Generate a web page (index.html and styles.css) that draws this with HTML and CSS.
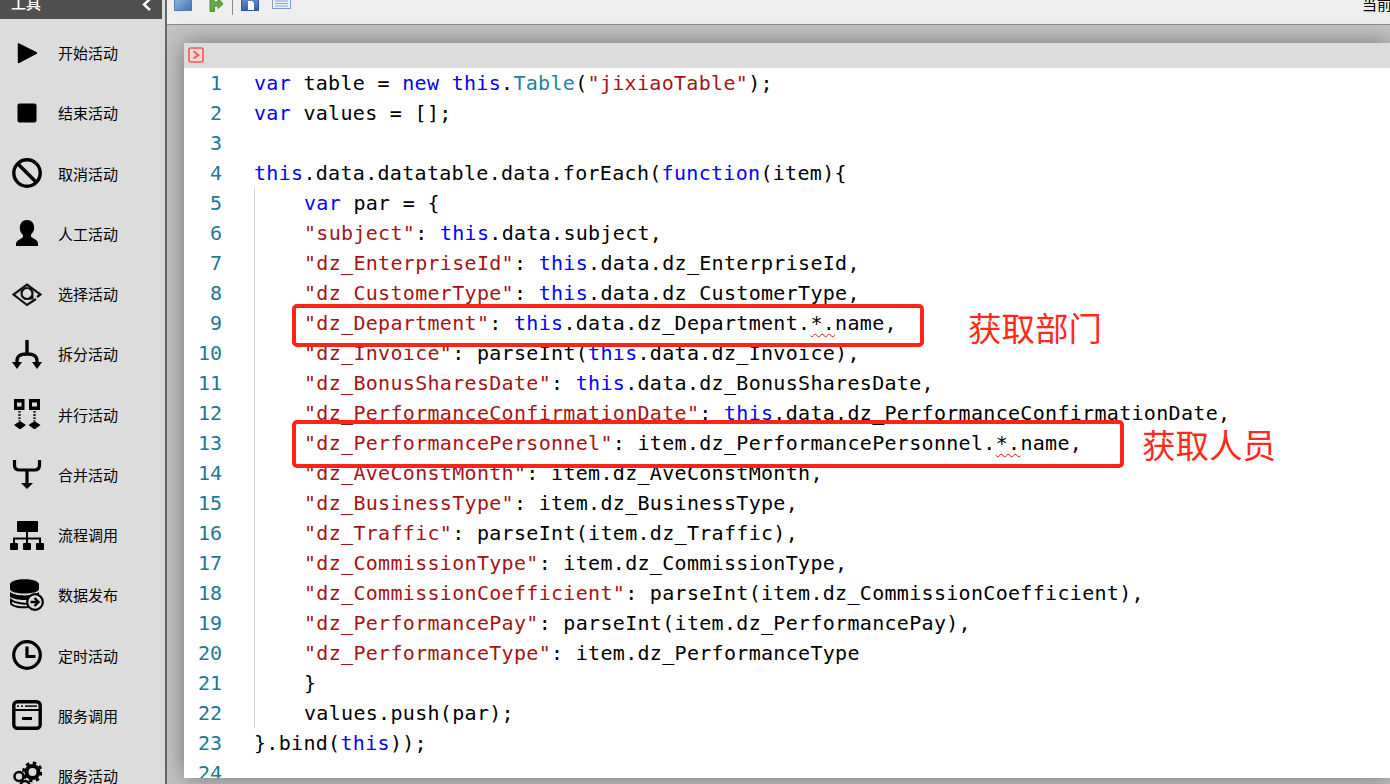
FILE: index.html
```html
<!DOCTYPE html>
<html lang="zh">
<head>
<meta charset="utf-8">
<title>流程设计</title>
<link rel="stylesheet" href="styles.css">
</head>
<body>
<aside class="sidebar">
  <div class="side-head"><span class="side-title">工具</span>
    <svg class="chev" width="10" height="12" viewBox="0 0 10 12"><path d="M8 -1 L2 4.500 L8 10" fill="none" stroke="#fff" stroke-width="2.400"/></svg>
  </div>
  <ul class="tools">
    <li class="tool"><svg class="ico" viewBox="0 0 30 30"><path d="M6.500 6 L24.500 15 L6.500 24.500Z" fill="#000" stroke="#000" stroke-width="1.500" stroke-linejoin="round"/></svg><span>开始活动</span></li>
    <li class="tool"><svg class="ico" viewBox="0 0 30 30"><rect x="5.500" y="5.500" width="19" height="19" rx="2" fill="#000"/></svg><span>结束活动</span></li>
    <li class="tool"><svg class="ico" viewBox="0 0 30 30"><circle cx="15" cy="15" r="13.200" fill="none" stroke="#000" stroke-width="3.400"/><path d="M6 6 L24 24" stroke="#000" stroke-width="3.600"/></svg><span>取消活动</span></li>
    <li class="tool"><svg class="ico" viewBox="0 0 30 30"><path d="M15 2c4.500 0 7.200 3.500 7.200 7.500 0 3-1.500 5.500-3.200 7v2c0 1.500 7 2.500 7 7v2.500H4V26c0-4.500 7-5.500 7-7v-2c-1.700-1.500-3.200-4-3.200-7C7.800 5.500 10.500 2 15 2Z" fill="#000"/></svg><span>人工活动</span></li>
    <li class="tool"><svg class="ico" viewBox="0 0 30 30"><path d="M24 20 L15 26 L1.500 15.500 L15 5.500 L28.500 15.500 L25 18" fill="none" stroke="#111" stroke-width="2.200"/><circle cx="15" cy="14.500" r="5.500" fill="none" stroke="#111" stroke-width="2.200"/><path d="M17 20.500h4.500v-4.500z" fill="#111"/></svg><span>选择活动</span></li>
    <li class="tool"><svg class="ico" viewBox="0 0 30 30"><path d="M15 1v13M5 25v-3c0-5 3-7 10-7s10 2 10 7v3" fill="none" stroke="#000" stroke-width="3.400"/><path d="M0 23h10l-5 7zM20 23h10l-5 7z" fill="#000"/></svg><span>拆分活动</span></li>
    <li class="tool"><svg class="ico" viewBox="0 0 30 30"><path d="M2 0h10.500v11H2zM5 3.500v4h4.500v-4zM17 0h11v11H17zM20 3.500v4h5v-4z" fill="#000" fill-rule="evenodd"/><path d="M7.500 12v10M22.500 12v10" stroke="#222" stroke-width="2.400" stroke-dasharray="1.800 1.300"/><path d="M8 22l6 4-6 4.500-6-4.500zM22.500 22l6 4-6 4.500-6-4.500z" fill="#000"/></svg><span>并行活动</span></li>
    <li class="tool"><svg class="ico" viewBox="0 0 30 30"><path d="M2.500 1v5c0 4 2 5 5 5h15c3 0 5-1 5-5V1M15 11v14" fill="none" stroke="#000" stroke-width="3.200"/><path d="M9 24h12l-6 6z" fill="#000"/></svg><span>合并活动</span></li>
    <li class="tool"><svg class="ico wide" viewBox="0 0 34 30"><rect x="7" y="1" width="21" height="11" rx="1" fill="#000"/><rect x="0" y="23" width="8" height="7" rx="1" fill="#000"/><rect x="13" y="23" width="8" height="7" rx="1" fill="#000"/><rect x="26" y="23" width="8" height="7" rx="1" fill="#000"/><path d="M17 12v11M4 23v-4.500h26V23" fill="none" stroke="#000" stroke-width="2"/></svg><span>流程调用</span></li>
    <li class="tool"><svg class="ico wide tall" viewBox="0 0 34 32"><path d="M0 5.500C0-1.500 29-1.500 29 5.500V10C29 16 0 16 0 10z" fill="#000"/><path d="M0 13c5 4.500 24 4.500 29 0v5c-6 4-23 4-29 0z" fill="#000"/><path d="M1 21c4 3 12 4 17 3.500v3.500c-6 1-17-.5-17-4z" fill="none" stroke="#000" stroke-width="2"/><circle cx="25" cy="23" r="7.800" fill="#dcdcdc" stroke="#000" stroke-width="2.200"/><path d="M20.500 23h7M24.500 19l4 4-4 4" fill="none" stroke="#000" stroke-width="2.400"/></svg><span>数据发布</span></li>
    <li class="tool"><svg class="ico" viewBox="0 0 30 30"><circle cx="15" cy="15" r="13.300" fill="none" stroke="#000" stroke-width="3.200"/><path d="M15 6.500v10h8.500" fill="none" stroke="#000" stroke-width="3.200"/></svg><span>定时活动</span></li>
    <li class="tool"><svg class="ico" viewBox="0 0 30 30"><rect x="1.800" y="1.800" width="26.400" height="26.400" rx="3.500" fill="none" stroke="#000" stroke-width="3.400"/><path d="M3 10h24" stroke="#000" stroke-width="2"/><path d="M5 6.200h2M9 6.200h2M13 6.200h12" stroke="#222" stroke-width="1.800"/><path d="M10 18.500h10" stroke="#000" stroke-width="3"/></svg><span>服务调用</span></li>
    <li class="tool"><svg class="ico" viewBox="0 0 30 30"><circle cx="20.500" cy="11" r="6" fill="none" stroke="#000" stroke-width="4"/><circle cx="20.500" cy="11" r="9" fill="none" stroke="#000" stroke-width="2.800" stroke-dasharray="3.500 3.570"/><circle cx="7" cy="15.500" r="4.500" fill="none" stroke="#000" stroke-width="2.600"/><circle cx="13" cy="24.500" r="4.500" fill="none" stroke="#000" stroke-width="2.600"/></svg><span>服务活动</span></li>
  </ul>
</aside>
<main class="main">
  <header class="toolbar">
    <svg class="tb-ico" width="18" height="11" viewBox="0 0 18 11"><defs><linearGradient id="gb" x1="0" y1="0" x2="1" y2="1"><stop offset="0" stop-color="#9cc2ea"/><stop offset="1" stop-color="#3f74b8"/></linearGradient></defs><rect x="0.500" y="-6" width="17" height="16.500" fill="url(#gb)" stroke="#4f7cb0"/></svg>
    <svg class="tb-ico" width="16" height="12" viewBox="0 0 16 12"><path d="M2 -2h4v4h4V-2l5 6-5 4.500V6H6.500v5.500H2z" fill="#62ad48" stroke="#4a8f36"/></svg>
    <span class="tb-sep"></span>
    <svg class="tb-ico" width="18" height="11" viewBox="0 0 18 11"><defs><linearGradient id="gd" x1="0" y1="0" x2="0" y2="1"><stop offset="0" stop-color="#7fa6d8"/><stop offset="1" stop-color="#2c5f9e"/></linearGradient></defs><rect x="0.500" y="-6" width="17" height="16.500" fill="url(#gd)" stroke="#2f5f98"/><path d="M7 1h4l2 2v7H7z" fill="#fff"/></svg>
    <svg class="tb-ico" width="19" height="9" viewBox="0 0 19 9"><rect x="0.500" y="-6" width="18" height="14.500" fill="#eaf1fb" stroke="#7f9cc8"/><path d="M3 1h13M3 3.500h13M3 6h13" stroke="#8aa6d0"/></svg>
    <span class="tb-text">当前</span>
  </header>
  <section class="stage">
    <div class="panel">
      <div class="panel-head">
        <svg width="16" height="16" viewBox="0 0 16 16"><rect x="1" y="1" width="14" height="14" rx="2" fill="#f3d6d6" stroke="#f2555a" stroke-width="1.600"/><path d="M5.500 4.500 L10.500 8 L5.500 11.500" fill="none" stroke="#f2555a" stroke-width="1.700"/></svg>
      </div>
      <div class="editor">
        <div class="line"><span class="num">1</span><code class="code"><b>var</b> table = <b>new</b> <b>this</b>.<i>Table</i>(<s>"jixiaoTable"</s>);</code></div>
        <div class="line"><span class="num">2</span><code class="code"><b>var</b> values = [];</code></div>
        <div class="line"><span class="num">3</span><code class="code"></code></div>
        <div class="line"><span class="num">4</span><code class="code"><b>this</b>.data.datatable.data.forEach(<b>function</b>(item){</code></div>
        <div class="line"><span class="num">5</span><code class="code ind"><b>var</b> par = {</code></div>
        <div class="line"><span class="num">6</span><code class="code ind"><s>"subject"</s>: <b>this</b>.data.subject,</code></div>
        <div class="line"><span class="num">7</span><code class="code ind"><s>"dz_EnterpriseId"</s>: <b>this</b>.data.dz_EnterpriseId,</code></div>
        <div class="line"><span class="num">8</span><code class="code ind"><s>"dz_CustomerType"</s>: <b>this</b>.data.dz_CustomerType,</code></div>
        <div class="line"><span class="num">9</span><code class="code ind"><s>"dz_Department"</s>: <b>this</b>.data.dz_Department.<u>*.</u>name,</code></div>
        <div class="line"><span class="num">10</span><code class="code ind"><s>"dz_Invoice"</s>: parseInt(<b>this</b>.data.dz_Invoice),</code></div>
        <div class="line"><span class="num">11</span><code class="code ind"><s>"dz_BonusSharesDate"</s>: <b>this</b>.data.dz_BonusSharesDate,</code></div>
        <div class="line"><span class="num">12</span><code class="code ind"><s>"dz_PerformanceConfirmationDate"</s>: <b>this</b>.data.dz_PerformanceConfirmationDate,</code></div>
        <div class="line"><span class="num">13</span><code class="code ind"><s>"dz_PerformancePersonnel"</s>: item.dz_PerformancePersonnel.<u>*.</u>name,</code></div>
        <div class="line"><span class="num">14</span><code class="code ind"><s>"dz_AveConstMonth"</s>: item.dz_AveConstMonth,</code></div>
        <div class="line"><span class="num">15</span><code class="code ind"><s>"dz_BusinessType"</s>: item.dz_BusinessType,</code></div>
        <div class="line"><span class="num">16</span><code class="code ind"><s>"dz_Traffic"</s>: parseInt(item.dz_Traffic),</code></div>
        <div class="line"><span class="num">17</span><code class="code ind"><s>"dz_CommissionType"</s>: item.dz_CommissionType,</code></div>
        <div class="line"><span class="num">18</span><code class="code ind"><s>"dz_CommissionCoefficient"</s>: parseInt(item.dz_CommissionCoefficient),</code></div>
        <div class="line"><span class="num">19</span><code class="code ind"><s>"dz_PerformancePay"</s>: parseInt(item.dz_PerformancePay),</code></div>
        <div class="line"><span class="num">20</span><code class="code ind"><s>"dz_PerformanceType"</s>: item.dz_PerformanceType</code></div>
        <div class="line"><span class="num">21</span><code class="code ind">}</code></div>
        <div class="line"><span class="num">22</span><code class="code ind">values.push(par);</code></div>
        <div class="line"><span class="num">23</span><code class="code">}.bind(<b>this</b>));</code></div>
        <div class="line"><span class="num">24</span><code class="code"></code></div>
      </div>
    </div>
    <div class="mark mark-dept"></div>
    <div class="note note-dept">获取部门</div>
    <div class="mark mark-person"></div>
    <div class="note note-person">获取人员</div>
  </section>
</main>
</body>
</html>
```
FILE: styles.css
```css
* { box-sizing: border-box; }
html, body { margin: 0; padding: 0; }
body {
  width: 1390px; height: 784px; overflow: hidden; display: flex;
  background: #c4c4c4; color: #000;
  font-family: "Noto Sans CJK SC", "Liberation Sans", sans-serif;
}
.sidebar { width: 167px; flex: none; height: 784px; overflow: hidden; background: #dcdcdc; border-right: 2px solid #686868; }
.side-head { height: 19px; background: #505050; display: flex; justify-content: space-between; align-items: flex-end; padding: 0 11px; overflow: hidden; width: 162px; }
.side-title { color: #fff; font-size: 15px; line-height: 20px; font-weight: 500; margin-bottom: 6px; }
.chev { margin-bottom: 7px; margin-right: -1px; }
.tools { list-style: none; margin: 3.5px 0 0; padding: 0; }
.tool { height: 60.25px; display: flex; align-items: center; font-size: 15px; }
.ico { width: 30px; height: 30px; margin-left: 12px; margin-right: 16px; flex: none; }
.ico.wide { width: 34px; margin-left: 10px; margin-right: 14px; }
.ico.tall { height: 32px; }
.main { flex: 1; min-width: 0; height: 784px; display: flex; flex-direction: column; position: relative; }
.toolbar { height: 25px; flex: none; background: #eeeeee; border-bottom: 1px solid #8a8a8a; display: flex; align-items: flex-start; padding-left: 7px; overflow: hidden; }
.tb-ico { flex: none; margin-right: 16px; }
.tb-sep { width: 1px; height: 15px; background: #888; margin-left: -8px; margin-right: 8px; }
.tb-ico:nth-of-type(3) { margin-right: 13px; }
.tb-text { margin-left: auto; margin-top: -6px; font-size: 15px; line-height: 20px; width: 28px; white-space: nowrap; overflow: hidden; }
.stage { flex: 1; min-height: 0; padding: 18px 0 6px 17px; position: relative; }
.panel { height: 735px; background: #fff; box-shadow: 0 0 22px rgba(0,0,0,.42); display: flex; flex-direction: column; overflow: hidden; }
.panel-head { height: 25px; flex: none; background: #dcdcdc; padding: 4px 0 0 4px; }
.panel-head svg { display: block; }
.editor { flex: 1; min-height: 0; overflow: hidden; }
.line { height: 30px; display: flex; line-height: 30px; font-family: "DejaVu Sans Mono", "Liberation Mono", monospace; font-size: 20px; letter-spacing: .31px; white-space: pre; }
.num { width: 38px; text-align: right; color: #237893; flex: none; letter-spacing: 0; }
.code { margin-left: 32px; font: inherit; letter-spacing: inherit; flex: 1; }
.code.ind { border-left: 1px solid #d3d3d3; padding-left: 49px; }
.code b { font-weight: 400; color: #0000ff; }
.code i { font-style: normal; color: #267f99; }
.code s { text-decoration: none; color: #a31515; }
.code u { text-decoration: underline wavy #e51400 1px; text-underline-offset: 3px; }
.mark { position: absolute; border: 4px solid #ff2318; border-radius: 5px; left: 125px; }
.mark-dept { top: 279px; width: 632px; height: 43px; }
.mark-person { top: 395px; width: 832px; height: 48px; }
.note { position: absolute; color: #ff2a1a; font-size: 33.5px; line-height: 44px; white-space: nowrap; }
.note-dept { left: 801px; top: 280px; }
.note-person { left: 975px; top: 397px; }
```
